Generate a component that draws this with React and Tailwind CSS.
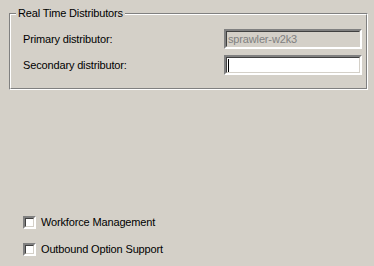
export default function App() {
  const sunken =
    "border-2 border-t-[#808080] border-l-[#808080] border-r-white border-b-white";
  const sunkenInner =
    "border border-t-[#404040] border-l-[#404040] border-r-[#d4d0c8] border-b-[#d4d0c8]";

  const Checkbox = ({ label }) => (
    <div className="flex items-center h-[13px]">
      <div className={`w-[13px] h-[13px] ${sunken} flex`}>
        <div className={`flex-1 bg-white ${sunkenInner}`} />
      </div>
      <span className="ml-[5px] text-[11px] leading-[13px] tracking-[-0.15px] text-black">{label}</span>
    </div>
  );

  return (
    <div
      className="w-[374px] h-[266px] bg-[#d4d0c8] overflow-hidden"
      style={{ fontFamily: '"Liberation Sans", Arial, sans-serif' }}
    >
      {/* group box */}
      <div className="relative mt-[13px] ml-[9px] w-[359px] h-[77px] border border-t-[#808080] border-l-[#808080] border-r-white border-b-white">
        <div className="h-full border border-t-white border-l-white border-r-[#808080] border-b-[#808080] pl-[12px] pr-[4px] pt-[14px] flex flex-col gap-[6px]">
          <div className="flex items-center justify-between h-[20px]">
            <span className="text-[11px] tracking-[-0.15px] text-black">Primary distributor:</span>
            <div className={`w-[138px] h-[20px] ${sunken} flex`}>
              <div className={`flex-1 bg-[#d4d0c8] ${sunkenInner} flex items-center pl-[1px] text-[11px] tracking-[-0.15px] text-[#808080]`}>
                sprawler-w2k3
              </div>
            </div>
          </div>
          <div className="flex items-center justify-between h-[20px]">
            <span className="text-[11px] tracking-[-0.15px] text-black">Secondary distributor:</span>
            <div className={`w-[138px] h-[20px] ${sunken} flex`}>
              <div className={`flex-1 bg-white ${sunkenInner} flex items-center pl-[1px]`}>
                <div className="w-px h-[13px] bg-black" />
              </div>
            </div>
          </div>
        </div>
        <div className="absolute left-[6px] -top-[8px] px-[2px] bg-[#d4d0c8] text-[11px] leading-[14px] tracking-[-0.15px] text-black">
          Real Time Distributors
        </div>
      </div>

      <div className="ml-[23px] mt-[126px] flex flex-col gap-[14px]">
        <Checkbox label="Workforce Management" />
        <Checkbox label="Outbound Option Support" />
      </div>
    </div>
  );
}
